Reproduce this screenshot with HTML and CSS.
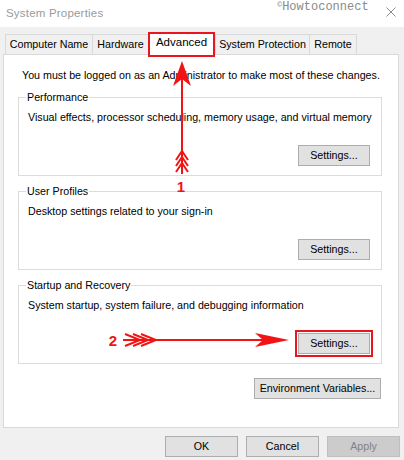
FILE: index.html
```html
<!DOCTYPE html>
<html lang="en">
<head>
<meta charset="utf-8">
<title>System Properties</title>
<link rel="stylesheet" href="styles.css">
</head>
<body>
<div class="window">
  <div class="titlebar">
    <span class="title">System Properties</span>
    <span class="watermark"><span class="copy">©</span>Howtoconnect</span>
    <svg class="close" width="10" height="10" viewBox="0 0 10 10"><path d="M0.5 0.5 L9.5 9.5 M9.5 0.5 L0.5 9.5" stroke="#8a8a8a" stroke-width="1" fill="none"/></svg>
  </div>

  <div class="tabs">
    <div class="tab t-cn">Computer Name</div>
    <div class="tab t-hw">Hardware</div>
    <div class="tab t-adv active">Advanced</div>
    <div class="tab t-sp">System Protection</div>
    <div class="tab t-rm">Remote</div>
  </div>

  <div class="panel">
    <p class="note">You must be logged on as an Administrator to make most of these changes.</p>

    <fieldset class="group">
      <legend>Performance</legend>
      <p class="desc">Visual effects, processor scheduling, memory usage, and virtual memory</p>
      <div class="actions"><button class="btn">Settings...</button></div>
    </fieldset>

    <fieldset class="group">
      <legend>User Profiles</legend>
      <p class="desc">Desktop settings related to your sign-in</p>
      <div class="actions"><button class="btn">Settings...</button></div>
    </fieldset>

    <fieldset class="group">
      <legend>Startup and Recovery</legend>
      <p class="desc">System startup, system failure, and debugging information</p>
      <div class="actions"><button class="btn marked">Settings...</button></div>
    </fieldset>

    <div class="env-row"><button class="btn env">Environment Variables...</button></div>
  </div>

  <div class="footer">
    <button class="btn dlg">OK</button>
    <button class="btn dlg">Cancel</button>
    <button class="btn dlg disabled">Apply</button>
  </div>

  <svg class="annot" width="404" height="460" viewBox="0 0 404 460">
    <g stroke="#f21414" fill="none" stroke-width="2">
      <line x1="182" y1="70" x2="182" y2="174"/>
      <path d="M176 160 L182 151 L188 160"/>
      <path d="M176 166 L182 157 L188 166"/>
      <path d="M176 172 L182 163 L188 172"/>
      <line x1="123" y1="340" x2="270" y2="340"/>
      <path d="M125 334 L140 340 L125 346"/>
      <path d="M133 334 L148 340 L133 346"/>
      <path d="M141 334 L156 340 L141 346"/>
    </g>
    <g fill="#f21414">
      <path d="M182 61 L191 86 L182 79 L173 86 Z"/>
      <path d="M289 340 L255 333 L263 340 L255 347 Z"/>
    </g>
    <text x="181" y="192" class="num" text-anchor="middle">1</text>
    <text x="113" y="346" class="num" text-anchor="middle">2</text>
  </svg>
</div>
</body>
</html>
```

FILE: styles.css
```css
* { box-sizing: border-box; }

html, body {
  margin: 0;
  padding: 0;
  background: #f0f0f0;
}

body {
  font-family: "Liberation Sans", Arial, sans-serif;
  font-size: 10.7px;
  line-height: 13px;
  color: #000;
}

.window {
  position: relative;
  width: 404px;
  height: 460px;
  overflow: hidden;
}

.titlebar {
  height: 27px;
  background: #fff;
  display: flex;
  align-items: flex-start;
  position: relative;
}

.title {
  margin: 6px 0 0 6px;
  font-size: 11.5px;
  line-height: 14px;
  color: #9a9a9a;
  letter-spacing: 0.2px;
}

.watermark {
  margin: 0 0 0 174px;
  font-family: "Liberation Mono", "Courier New", monospace;
  font-size: 12px;
  line-height: 14px;
  color: #8a8a8a;
}

.watermark .copy {
  font-size: 8px;
  vertical-align: top;
  line-height: 10px;
}

.close {
  margin: 7px 0 0 auto;
  margin-right: 8px;
}

.tabs {
  display: flex;
  margin: 7px 0 0 5px;
  height: 20px;
}

.tab {
  height: 20px;
  border: 1px solid #d9d9d9;
  border-bottom: none;
  border-right: none;
  background: #f0f0f0;
  text-align: center;
  padding-top: 3px;
  white-space: nowrap;
}

.t-cn { width: 87px; }
.t-hw { width: 56px; }
.t-sp { width: 94px; }
.t-rm { width: 48px; border-right: 1px solid #d9d9d9; }

.tab.active {
  width: 67px;
  height: 25px;
  margin-top: -2px;
  border: 2px solid #e8161d;
  background: #fff;
  position: relative;
  z-index: 1;
  padding-top: 2px;
  font-size: 11.5px;
}

.panel {
  margin: 0 5px 0 3px;
  background: #fff;
  border: 1px solid #d9d9d9;
  padding: 14px 0 28px 0;
}

.note {
  margin: 0 0 0 18px;
  white-space: nowrap;
}

.group {
  margin: 9px 16px 0 14px;
  padding: 0 11px 9px 9px;
  border: 1px solid #dcdcdc;
  min-width: 0;
}

.group + .group { margin-top: 9px; }

.group legend {
  padding: 0 1px;
  margin-left: -2px;
}

.desc {
  margin: 7px 0 0 0;
  white-space: nowrap;
}

.actions {
  display: flex;
  justify-content: flex-end;
  margin-top: 21px;
}

.btn {
  font-family: "Liberation Sans", Arial, sans-serif;
  font-size: 10.7px;
  line-height: 13px;
  color: #000;
  background: #e1e1e1;
  border: 1px solid #adadad;
  height: 21px;
  width: 72px;
  padding: 0;
  margin: 0;
}

.btn.marked {
  outline: 2px solid #e8161d;
  outline-offset: 1px;
}

.env-row {
  display: flex;
  justify-content: flex-end;
  margin: 14px 17px 0 0;
}

.btn.env {
  width: 127px;
}

.footer {
  display: flex;
  justify-content: flex-end;
  gap: 8px;
  margin: 8px 4px 0 0;
}

.btn.dlg { width: 73px; }

.btn.disabled {
  background: #cccccc;
  border-color: #bfbfbf;
  color: #838383;
}

.annot {
  position: absolute;
  left: 0;
  top: 0;
  pointer-events: none;
}

.num {
  font-family: "Liberation Sans", Arial, sans-serif;
  font-size: 15px;
  font-weight: bold;
  fill: #f21414;
}
```
